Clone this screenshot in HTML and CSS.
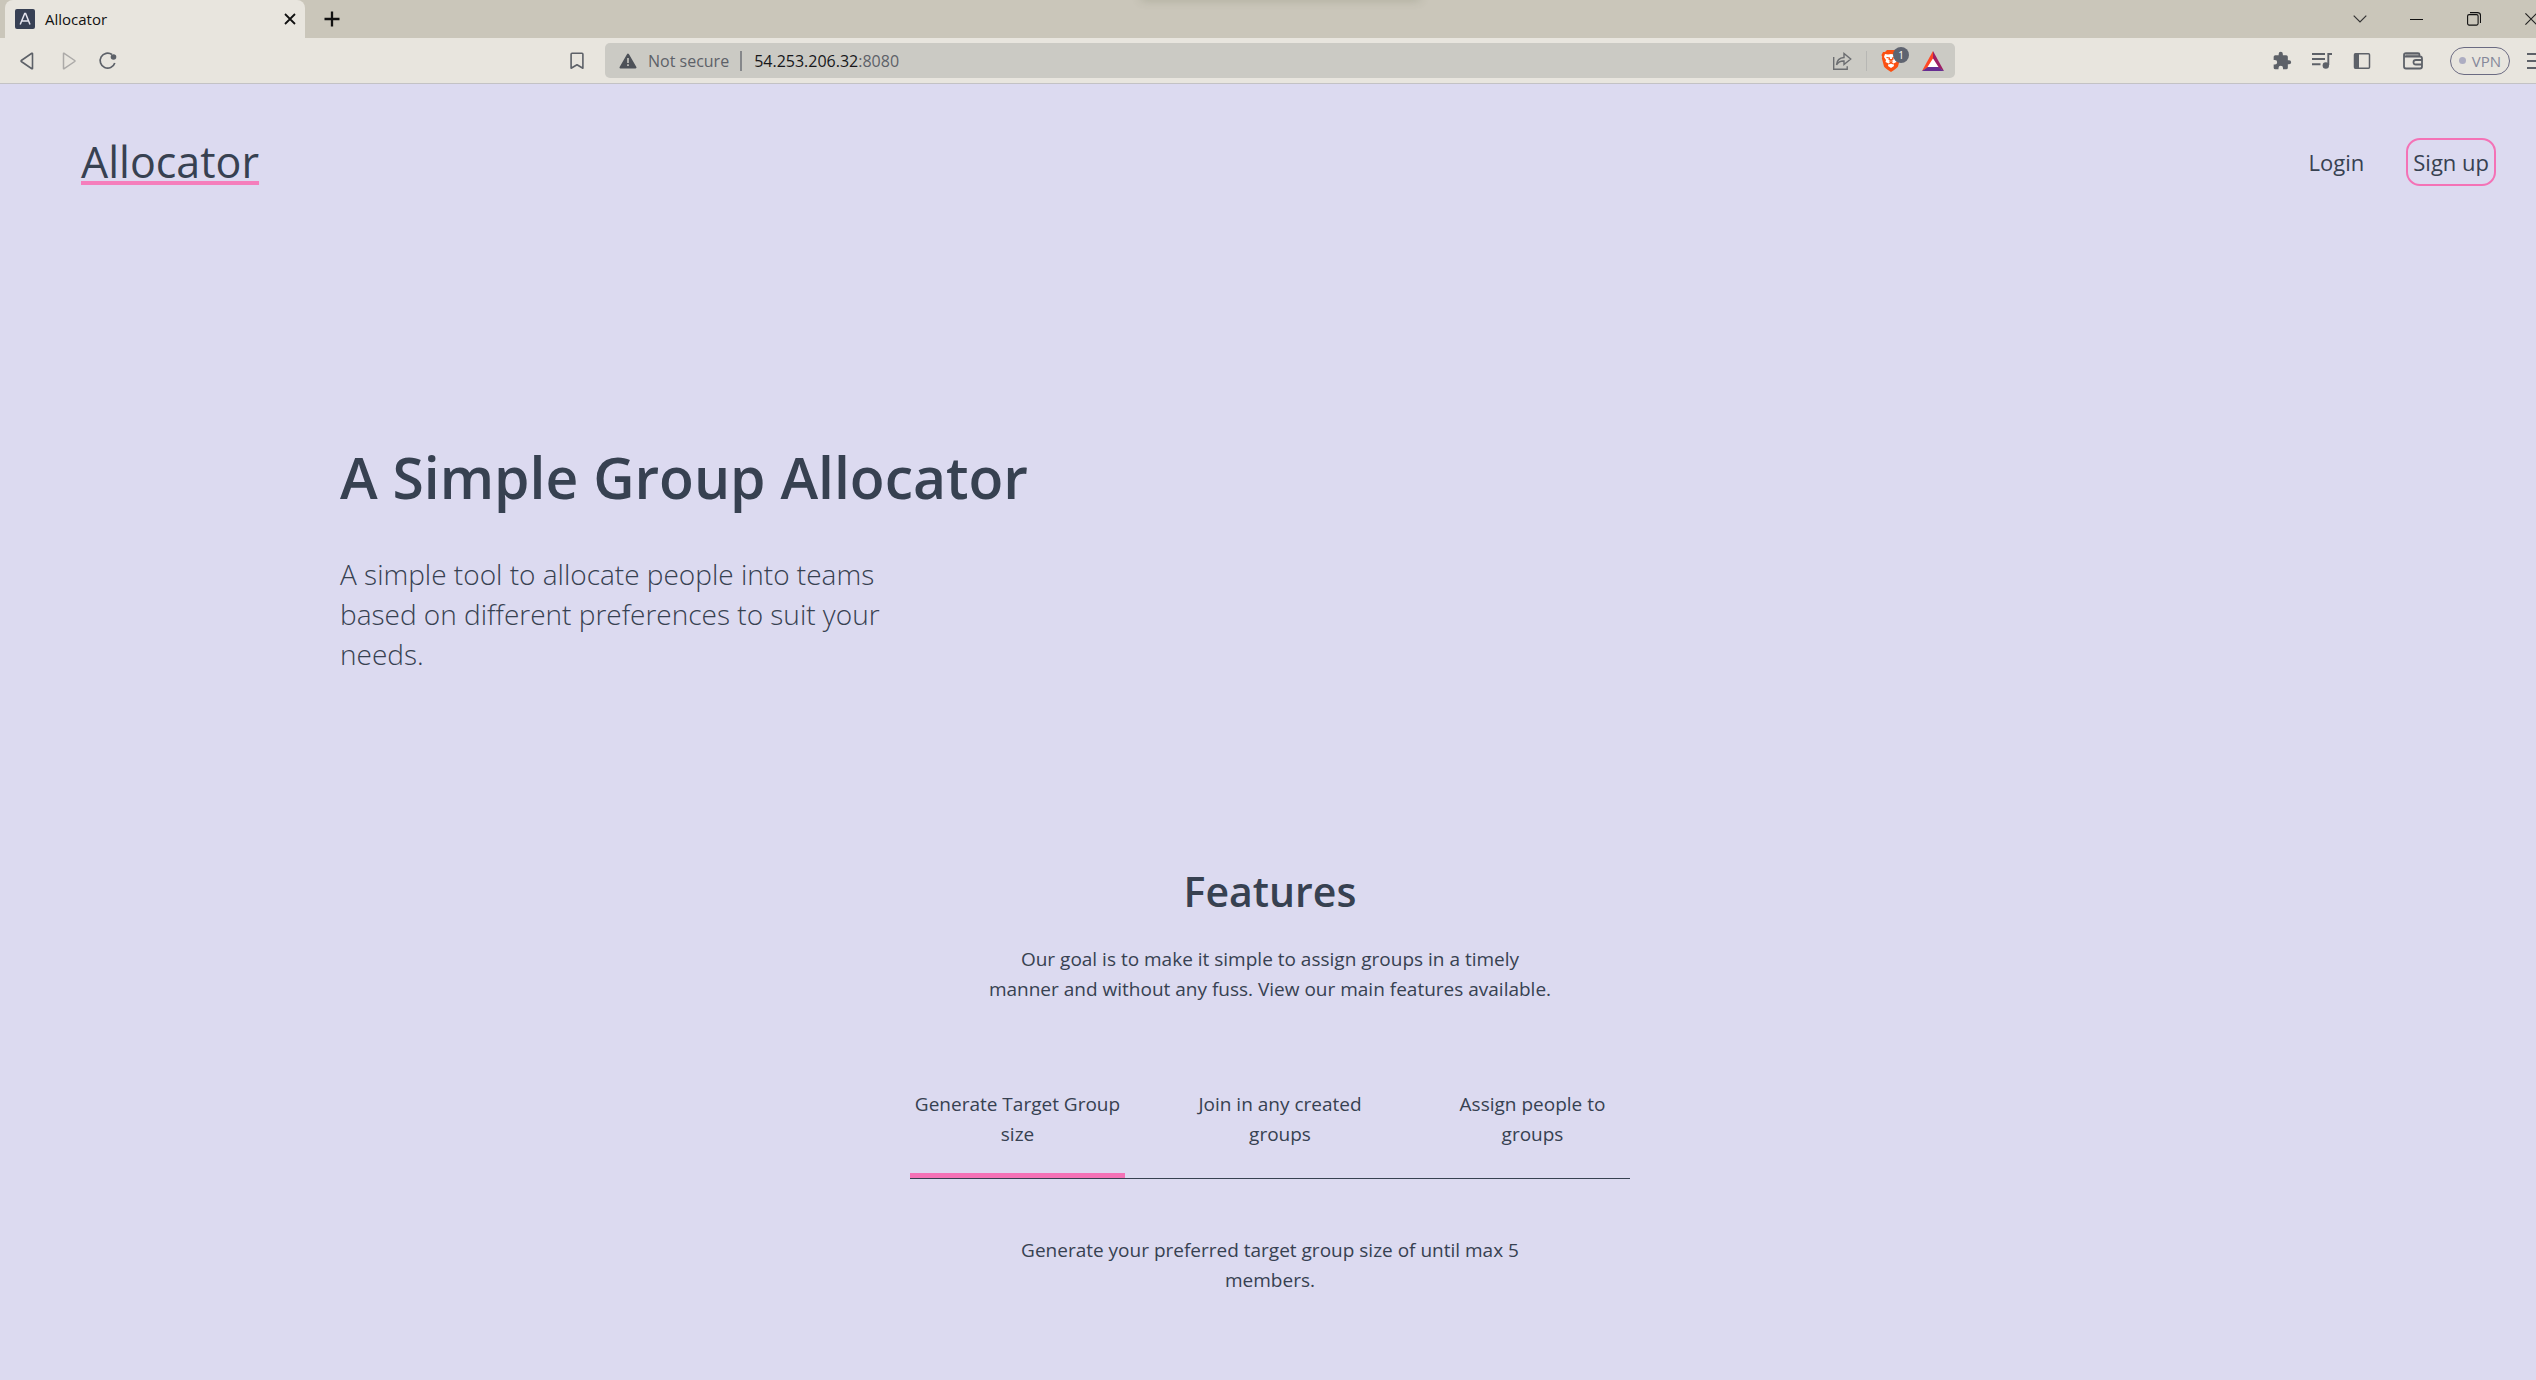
FILE: index.html
```html
<!DOCTYPE html>
<html lang="en">
<head>
<meta charset="utf-8">
<title>Allocator</title>
<link rel="stylesheet" href="styles.css">
</head>
<body>
<div class="browser">
  <div class="tabstrip">
    <div class="tab">
      <span class="favicon"><svg viewBox="0 0 20 20" width="20" height="20"><path d="M5.200 15.500 9.700 4.500h.9L15 15.500M6.800 12h6.600" fill="none" stroke="#e4e3ee" stroke-width="1.500"/></svg></span>
      <span class="tab-title">Allocator</span>
      <button class="tab-close" aria-label="Close tab"><svg viewBox="0 0 12 12" width="12" height="12"><path d="M1 1l10 10M11 1 1 11" stroke="#111" stroke-width="1.800"/></svg></button>
    </div>
    <button class="new-tab" aria-label="New tab"><svg viewBox="0 0 16 16" width="16" height="16"><path d="M8 .5v15M.5 8h15" stroke="#111" stroke-width="2.300"/></svg></button>
    <span class="drop-shadow"></span>
    <div class="window-controls">
      <button aria-label="Search tabs"><svg viewBox="0 0 14 8" width="14" height="8"><path d="M.7.7 7 7 13.300.7" fill="none" stroke="#333" stroke-width="1.200"/></svg></button>
      <button aria-label="Minimise"><svg viewBox="0 0 13 13" width="13" height="13"><path d="M0 6.500h13" stroke="#111"/></svg></button>
      <button aria-label="Restore"><svg viewBox="0 0 14 14" width="14" height="14"><rect x=".6" y="2.600" width="10.500" height="10.500" rx="1.500" fill="none" stroke="#111" stroke-width="1.100"/><path d="M3 .6h7.500q3 0 3 3V11" fill="none" stroke="#111" stroke-width="1.100"/></svg></button>
      <button aria-label="Close"><svg viewBox="0 0 12 12" width="12" height="12"><path d="M.4.400l11.200 11.200M11.600.4.400 11.600" stroke="#222" stroke-width="1.200"/></svg></button>
    </div>
  </div>
  <div class="toolbar">
    <div class="tools-left">
      <button aria-label="Back"><svg viewBox="0 0 20 20" width="20" height="20"><path d="M14.500 2.500v15q0 .5-.7.200L3.300 10.500q-.6-.5 0-1L13.800 2.300q.7-.3.700.2z" fill="none" stroke="#5d6168" stroke-width="1.600"/></svg></button>
      <button aria-label="Forward"><svg viewBox="0 0 20 20" width="20" height="20"><path d="M5.500 2.500v15q0 .5.7.200l10.500-7.200q.6-.5 0-1L6.200 2.300q-.7-.3-.7.200z" fill="none" stroke="#acaaa8" stroke-width="1.500"/></svg></button>
      <button aria-label="Reload"><svg viewBox="0 0 20 20" width="20" height="20"><path d="M14 3.500A7.500 7.500 0 1 0 16.800 12" fill="none" stroke="#5d6168" stroke-width="1.700"/><circle cx="15.500" cy="6" r="2.800" fill="#5d6168"/></svg></button>
      <button class="bookmark" aria-label="Bookmark"><svg viewBox="0 0 20 20" width="20" height="20"><path d="M5 2.300h10q.9 0 .9.900v14l-5.900-3.500-5.900 3.500v-14q0-.9.900-.9z" fill="none" stroke="#5d6168" stroke-width="1.600" stroke-linejoin="round"/></svg></button>
    </div>
    <div class="address">
      <svg viewBox="0 0 18 16" width="18" height="16"><path d="M9 1.500 16.500 14.500H1.500z" fill="#4d5158" stroke="#4d5158" stroke-width="2" stroke-linejoin="round"/><path d="M9 5v5M9 11.300v1.700" stroke="#cbcac4" stroke-width="1.600"/></svg>
      <span class="insecure">Not secure</span>
      <span class="url"><b>54.253.206.32</b>:8080</span>
      <button class="share" aria-label="Share"><svg viewBox="0 0 20 20" width="20" height="20"><path d="M1.700 6v12.200h13.500v-3M4.500 13.800Q5 7 12 6.500V2.500L18.700 8 12 13.500V10Q7 9.800 4.500 13.800z" fill="none" stroke="#6b6d70" stroke-width="1.400"/></svg></button>
      <button class="shield" aria-label="Shields"><svg viewBox="0 0 20 24" width="20" height="24"><path d="M6 1h8l2 2h2l1.500 3-.7 2 .4 1-2.200 8.500Q16 19 10 23 4 19 3 17.500L.8 9l.4-1-.7-2L2 3h2z" fill="#fb5012"/><path d="m4 5 3 .5L10 5l3 .5 3-.5 1 3-2 3 .5 2-3 1.500L13 17l-3 2-3-2 .5-2.500L4.500 13l.5-2-2-3z" fill="#fff"/><path d="m5.500 8.500 3 .5-.5 2M14.500 8.500l-3 .5.500 2M9.500 10 9 13l1 1 1-1-.5-3M7.500 15l2.500-1 2.500 1" fill="none" stroke="#fb5012" stroke-width="1.200"/></svg><span class="badge">1</span></button>
      <button class="rewards" aria-label="Rewards"><svg viewBox="0 0 24 22" width="24" height="22"><path d="M12 1 1 21l6-3.500L12 9z" fill="#ff4724"/><path d="M12 1l11 20-6-3.500L12 9z" fill="#9e1f63"/><path d="M1 21h22l-6-4H7z" fill="#662d91"/><path d="M12 8.500 17.500 17h-11z" fill="#fff"/></svg></button>
    </div>
    <div class="tools-right">
      <button aria-label="Extensions"><svg viewBox="0 0 24 24" width="20" height="20"><path d="M20.500 11H19V7a2 2 0 0 0-2-2h-4V3.500a2.500 2.500 0 0 0-5 0V5H4a2 2 0 0 0-2 2v3.800h1.500a2.700 2.700 0 0 1 0 5.400H2V20a2 2 0 0 0 2 2h3.800v-1.500a2.700 2.700 0 0 1 5.400 0V22H17a2 2 0 0 0 2-2v-4h1.500a2.500 2.500 0 0 0 0-5z" fill="#5d6168"/></svg></button>
      <button aria-label="Media"><svg viewBox="0 0 20 18" width="20" height="18"><path d="M0 2h13M0 7h13M0 12.200h8.500M16.300 13V2H20" fill="none" stroke="#5d6168" stroke-width="1.900"/><circle cx="13.800" cy="13.500" r="3.200" fill="#5d6168"/></svg></button>
      <button aria-label="Sidebar"><svg viewBox="0 0 18 18" width="18" height="18"><rect x="1.500" y="1.800" width="15" height="14.500" rx="1" fill="none" stroke="#5d6168" stroke-width="1.500"/><path d="M1.500 1.800H6v14.500H1.500z" fill="#5d6168"/></svg></button>
      <button class="wallet" aria-label="Wallet"><svg viewBox="0 0 20 18" width="20" height="18"><path d="M1 3v11.500q0 2 2 2h14q2 0 2-2V6.500q0-2-2-2H3Q1 4.500 1 3q0-1.800 2-1.800h12q1.500 0 1.500 1.500v1.500M19 8h-6q-2.500 0-2.500 2.300T13 12.500h6" fill="none" stroke="#5d6168" stroke-width="1.800"/><path d="M2 1.500h14v3H3z" fill="#5d6168" opacity=".6"/></svg></button>
      <button class="vpn">VPN</button>
      <button aria-label="Menu"><svg viewBox="0 0 20 18" width="20" height="18"><path d="M0 2h20M0 9h20M0 16h20" stroke="#5d6168" stroke-width="1.800"/></svg></button>
    </div>
  </div>
</div>

<header class="site-nav">
  <a class="logo" href="#">Allocator</a>
  <nav class="links">
    <a href="#login">Login</a>
    <a class="signup" href="#signup">Sign up</a>
  </nav>
</header>

<main>
  <section class="hero">
    <h1>A Simple Group Allocator</h1>
    <p>A simple tool to allocate people into teams based on different preferences to suit your needs.</p>
  </section>
  <section class="features">
    <h2>Features</h2>
    <p class="intro">Our goal is to make it simple to assign groups in a timely manner and without any fuss. View our main features available.</p>
    <div class="feature-tabs" role="tablist">
      <button role="tab" aria-selected="true">Generate Target Group size</button>
      <button role="tab" aria-selected="false">Join in any created groups</button>
      <button role="tab" aria-selected="false">Assign people to groups</button>
    </div>
    <p class="panel" role="tabpanel">Generate your preferred target group size of until max 5 members.</p>
  </section>
</main>
</body>
</html>
```

FILE: styles.css
```css
* { box-sizing: border-box; }

body {
  margin: 0;
  background: #dcdaf0;
  color: #374151;
  font-family: "Open Sans", "Noto Sans", sans-serif;
  font-size: 19px;
  line-height: 30px;
  overflow-x: hidden;
}

h1, h2, p { margin: 0; }
a { color: inherit; text-decoration: none; }
button {
  padding: 0;
  border: 0;
  background: none;
  color: inherit;
  font: inherit;
}
svg { display: block; }

/* Browser frame */
.browser { overflow: hidden; border-bottom: 1px solid #c3c2c4; }

.tabstrip {
  position: relative;
  display: flex;
  align-items: stretch;
  height: 38px;
  padding-left: 5px;
  background: #cac6ba;
}
.tab {
  display: flex;
  align-items: center;
  gap: 10px;
  width: 300px;
  padding: 0 9px 0 10px;
  border-radius: 8px 8px 0 0;
  background: #e8e5de;
  color: #111;
  font-size: 15px;
}
.favicon { border-radius: 2px; background: #374054; }
.tab-close { margin-left: auto; }
.new-tab { width: 54px; }
.new-tab svg, .window-controls svg, .toolbar button svg { margin: auto; }
.drop-shadow {
  position: absolute;
  top: -6px;
  left: 45%;
  width: 11%;
  height: 6px;
  box-shadow: 0 0 10px rgba(90, 100, 70, .3);
}
.window-controls { display: flex; margin: 0 -23px 0 auto; }
.window-controls button { width: 57px; }

.toolbar {
  display: grid;
  grid-template-columns: 605fr 1350fr 581fr;
  align-items: center;
  height: 45px;
  background: #e8e5de;
}
.tools-left, .tools-right { display: flex; align-items: center; }
.tools-left { padding: 0 8px; }
.tools-left button, .tools-right button { width: 40px; }
.tools-left .bookmark { margin-left: auto; }
.tools-right { justify-content: flex-end; margin-right: -21px; }
.tools-right .wallet { margin: 0 17px 0 11px; }
.tools-right .vpn {
  display: flex;
  align-items: center;
  justify-content: center;
  gap: 6px;
  width: 60px;
  height: 28px;
  margin-right: 7px;
  border: 1px solid #6b6b82;
  border-radius: 14px;
  color: #85889a;
  font-size: 15px;
}
.vpn::before {
  content: "";
  flex: none;
  width: 7px;
  height: 7px;
  border-radius: 50%;
  background: #adadc2;
}

.address {
  display: flex;
  align-items: center;
  height: 35px;
  padding: 0 10px 0 14px;
  border-radius: 5px;
  background: #cbcac4;
  color: #5d6168;
  font-size: 16px;
}
.insecure {
  margin-left: 11px;
  padding-right: 11px;
  border-right: 2px solid #85878a;
  line-height: 20px;
}
.url { margin-left: 12px; }
.url b { color: #17171a; font-weight: 400; }
.share {
  margin-left: auto;
  padding-right: 14px;
  border-right: 1px solid #b7b7b4;
}
.shield { position: relative; margin: 0 20px 0 14px; }
.badge {
  position: absolute;
  top: -2px;
  left: 12px;
  width: 16px;
  height: 16px;
  border-radius: 50%;
  background: #5f6470;
  color: #fff;
  font-size: 10px;
  line-height: 16px;
}

/* Site navigation */
.site-nav {
  display: flex;
  align-items: center;
  justify-content: space-between;
  padding: 48px 40px 0 81px;
}
.logo {
  font-size: 43px;
  line-height: 60px;
  text-decoration: underline 4px #f57ebc;
  text-underline-offset: 3px;
}
.links { display: flex; align-items: center; gap: 37px; font-size: 22px; }
.links a { padding: 7px 5px; }
.links .signup { border: 2px solid #f472b6; border-radius: 14px; }

/* Hero */
.hero { padding: 255px 340px 0; }
.hero h1 {
  font-size: 57px;
  font-weight: 600;
  line-height: 60px;
}
.hero p {
  max-width: 560px;
  margin-top: 47px;
  font-size: 28px;
  font-weight: 300;
  line-height: 40px;
}

/* Features */
.features {
  display: flex;
  flex-direction: column;
  align-items: center;
  padding: 192px 0 60px 4px;
  text-align: center;
}
.features h2 {
  font-size: 41px;
  font-weight: 600;
  line-height: 50px;
}
.intro { max-width: 570px; margin-top: 28px; }
.feature-tabs {
  display: grid;
  grid-template-columns: 43fr 62fr 39fr;
  width: 100%;
  max-width: 720px;
  margin-top: 70px;
  border-bottom: 1px solid #374151;
}
.feature-tabs button {
  padding: 15px 0 24px;
  border-bottom: 5px solid transparent;
}
.feature-tabs button + button { padding-right: 20px; padding-left: 20px; }
.feature-tabs button:nth-child(2) { padding-right: 60px; padding-left: 60px; }
.feature-tabs [aria-selected="true"] { border-color: #f472b6; }
.panel { max-width: 540px; margin-top: 56px; }
```
